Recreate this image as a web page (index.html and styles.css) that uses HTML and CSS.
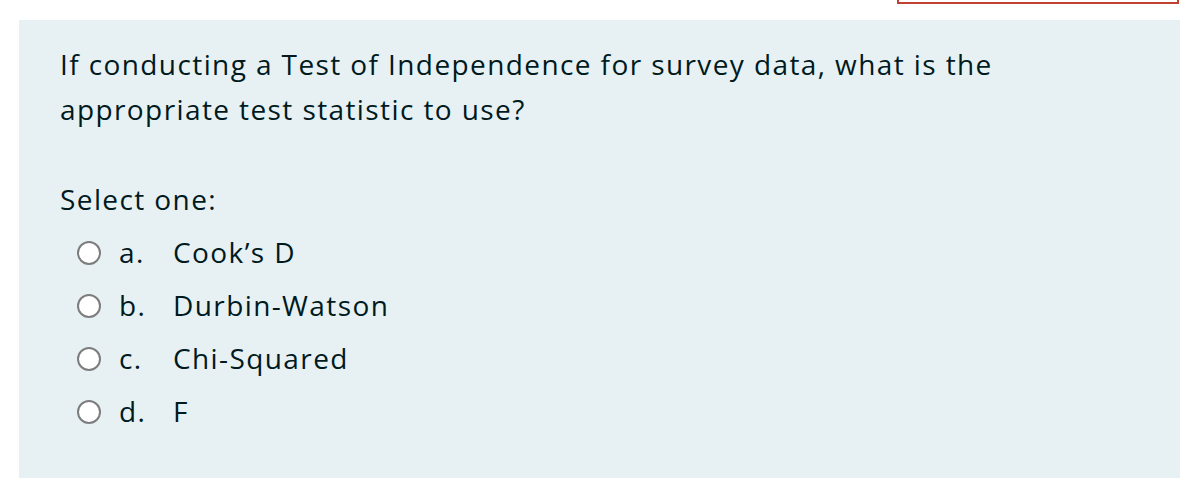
FILE: index.html
```html
<!DOCTYPE html>
<html>
<head>
<meta charset="utf-8">
<link rel="stylesheet" href="styles.css">
</head>
<body>
<div class="topbar"><div class="flagbox"></div></div>
<div class="formulation">
  <div class="qtext">If conducting a Test of Independence for survey data, what is the appropriate test statistic to use?</div>
  <div class="prompt">Select one:</div>
  <div class="answers">
    <div class="opt"><span class="radio"></span><span class="num">a.</span><span class="lbl">Cook’s D</span></div>
    <div class="opt"><span class="radio"></span><span class="num">b.</span><span class="lbl">Durbin-Watson</span></div>
    <div class="opt"><span class="radio"></span><span class="num">c.</span><span class="lbl">Chi-Squared</span></div>
    <div class="opt"><span class="radio"></span><span class="num">d.</span><span class="lbl">F</span></div>
  </div>
</div>
</body>
</html>
```
FILE: styles.css
```css
html, body {
  margin: 0;
  padding: 0;
  background: #ffffff;
}
body {
  font-family: "Open Sans", "Liberation Sans", sans-serif;
  color: #001a1e;
}
.topbar {
  display: flex;
  justify-content: flex-end;
  padding-right: 15px;
}
.flagbox {
  width: 278px;
  height: 2px;
  border: 2px solid #c0412f;
  border-top: none;
}
.formulation {
  margin: 16px 14px 0 19px;
  height: 458px;
  box-sizing: border-box;
  background: #e7f1f4;
  padding: 22px 41px 0 41px;
  font-size: 28px;
  line-height: 45px;
  letter-spacing: 1.4px;
}
.qtext {
  width: 960px;
}
.prompt {
  margin-top: 45px;
}
.answers {
  margin-top: 4px;
}
.opt {
  display: flex;
  align-items: center;
  height: 53px;
}
.radio {
  width: 20px;
  height: 20px;
  border: 2px solid #7d7d7d;
  border-radius: 50%;
  background: #ffffff;
  margin-left: 17px;
  margin-right: 18px;
  flex: none;
}
.num {
  width: 54px;
}
```
